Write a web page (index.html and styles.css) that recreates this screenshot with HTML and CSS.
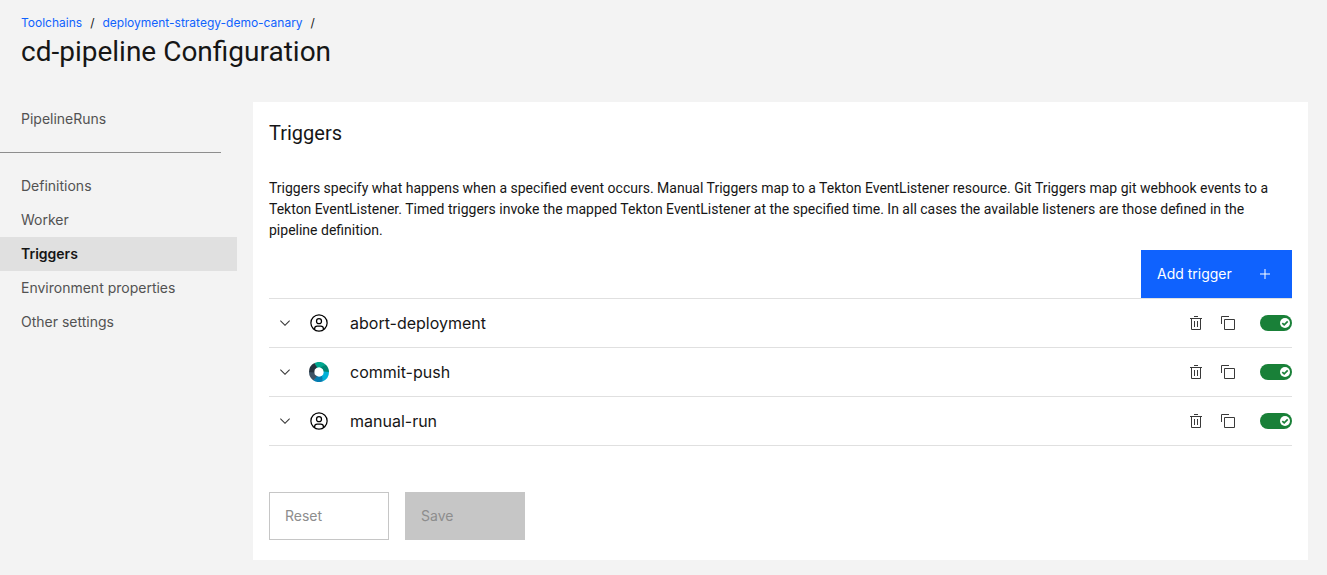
FILE: index.html
```html
<!DOCTYPE html>
<html lang="en">
<head>
<meta charset="utf-8">
<meta name="viewport" content="width=device-width, initial-scale=1">
<title>cd-pipeline Configuration</title>
<link rel="stylesheet" href="styles.css">
</head>
<body>
<svg class="sprite" aria-hidden="true">
  <symbol id="chevron" viewBox="0 0 16 16"><path d="M8 11 3 6l.7-.7L8 9.6l4.300-4.300.7.7z"/></symbol>
  <symbol id="user" viewBox="0 0 32 32"><path d="M16 8a5 5 0 1 0 5 5 5 5 0 0 0-5-5zm0 8a3 3 0 1 1 3-3 3 3 0 0 1-3 3z"/><path d="M16 2a14 14 0 1 0 14 14A14 14 0 0 0 16 2zm-6 24.400V25a3 3 0 0 1 3-3h6a3 3 0 0 1 3 3v1.400a11.900 11.900 0 0 1-12 0zm14-1.500A5 5 0 0 0 19 20h-6a5 5 0 0 0-5 4.900 12 12 0 1 1 16 0z"/></symbol>
  <symbol id="trash" viewBox="0 0 32 32"><path d="M12 12h2v12h-2zM18 12h2v12h-2zM4 6v2h2v20a2 2 0 0 0 2 2h16a2 2 0 0 0 2-2V8h2V6zm4 22V8h16v20zM12 2h8v2h-8z"/></symbol>
  <symbol id="copy" viewBox="0 0 32 32"><path d="M28 10v18H10V10h18m0-2H10a2 2 0 0 0-2 2v18a2 2 0 0 0 2 2h18a2 2 0 0 0 2-2V10a2 2 0 0 0-2-2z"/><path d="M4 18H2V4a2 2 0 0 1 2-2h14v2H4z"/></symbol>
  <symbol id="knob" viewBox="0 0 10 10"><circle cx="5" cy="5" r="5" fill="#fff"/><path d="M2.300 5.100 4.200 6.900 7.700 3.400" fill="none" stroke="#198038" stroke-width="1.700"/></symbol>
</svg>

<header class="page-header">
  <nav aria-label="Breadcrumb">
    <ol class="breadcrumb">
      <li><a href="#toolchains">Toolchains</a></li>
      <li><a href="#toolchain">deployment-strategy-demo-canary</a></li>
    </ol>
  </nav>
  <h1 class="page-title">cd-pipeline Configuration</h1>
</header>

<div class="layout">
  <nav class="side-nav" aria-label="Pipeline">
    <a class="nav-link" href="#runs">PipelineRuns</a>
    <hr class="nav-divider">
    <a class="nav-link" href="#definitions">Definitions</a>
    <a class="nav-link" href="#worker">Worker</a>
    <a class="nav-link nav-link-active" href="#triggers" aria-current="page">Triggers</a>
    <a class="nav-link" href="#environment">Environment properties</a>
    <a class="nav-link" href="#other">Other settings</a>
  </nav>

  <main class="panel">
    <h2 class="panel-title">Triggers</h2>
    <p class="panel-text">Triggers specify what happens when a specified event occurs. Manual Triggers map to a Tekton EventListener resource. Git Triggers map git webhook events to a Tekton EventListener. Timed triggers invoke the mapped Tekton EventListener at the specified time. In all cases the available listeners are those defined in the pipeline definition.</p>
    <div class="toolbar">
      <button class="button button-primary" type="button">Add trigger
        <svg class="icon" viewBox="0 0 16 16" aria-hidden="true"><path d="M8.500 7.500V3h-1v4.500H3v1h4.500V13h1V8.500H13v-1z"/></svg>
      </button>
    </div>
    <ul class="trigger-list">
      <li class="trigger">
        <button class="icon-button" type="button" aria-label="Expand abort-deployment"><svg class="icon"><use href="#chevron"/></svg></button>
        <svg class="trigger-icon" aria-hidden="true"><use href="#user"/></svg>
        <span class="trigger-name">abort-deployment</span>
        <button class="icon-button" type="button" aria-label="Delete abort-deployment"><svg class="icon"><use href="#trash"/></svg></button>
        <button class="icon-button" type="button" aria-label="Duplicate abort-deployment"><svg class="icon"><use href="#copy"/></svg></button>
        <label class="toggle"><input class="toggle-input" type="checkbox" role="switch" aria-label="Enable abort-deployment" checked><svg class="toggle-knob" aria-hidden="true"><use href="#knob"/></svg></label>
      </li>
      <li class="trigger">
        <button class="icon-button" type="button" aria-label="Expand commit-push"><svg class="icon"><use href="#chevron"/></svg></button>
        <svg class="trigger-icon" viewBox="0 0 20 20" aria-hidden="true">
          <path fill="#00a78f" d="M5.500 1.100A10 10 0 0 1 16.500 2.400L12.500 6 10 5.200 7.500 6z"/>
          <path fill="#008571" d="M16.500 2.400A10 10 0 0 1 20 10l-5.200 0-1-2.800L11.500 5.500z"/>
          <path fill="#00b0d7" d="M20 10a10 10 0 0 1-6 9.200L12 14.400 14.200 12.500 14.800 9.500z"/>
          <path fill="#047cb0" d="M14 19.200A10 10 0 0 1 4.500 18.400L7.200 13.800 10 14.800l3-.9z"/>
          <path fill="#3d5265" d="M4.500 18.400A10 10 0 0 1 0 10l5.200-.5.600 3 2.200 1.800z"/>
          <path fill="#25313d" d="M0 10A10 10 0 0 1 5.500 1.100L8 5.600 5.800 7.600 5.200 10.500z"/>
        </svg>
        <span class="trigger-name">commit-push</span>
        <button class="icon-button" type="button" aria-label="Delete commit-push"><svg class="icon"><use href="#trash"/></svg></button>
        <button class="icon-button" type="button" aria-label="Duplicate commit-push"><svg class="icon"><use href="#copy"/></svg></button>
        <label class="toggle"><input class="toggle-input" type="checkbox" role="switch" aria-label="Enable commit-push" checked><svg class="toggle-knob" aria-hidden="true"><use href="#knob"/></svg></label>
      </li>
      <li class="trigger">
        <button class="icon-button" type="button" aria-label="Expand manual-run"><svg class="icon"><use href="#chevron"/></svg></button>
        <svg class="trigger-icon" aria-hidden="true"><use href="#user"/></svg>
        <span class="trigger-name">manual-run</span>
        <button class="icon-button" type="button" aria-label="Delete manual-run"><svg class="icon"><use href="#trash"/></svg></button>
        <button class="icon-button" type="button" aria-label="Duplicate manual-run"><svg class="icon"><use href="#copy"/></svg></button>
        <label class="toggle"><input class="toggle-input" type="checkbox" role="switch" aria-label="Enable manual-run" checked><svg class="toggle-knob" aria-hidden="true"><use href="#knob"/></svg></label>
      </li>
    </ul>
    <div class="actions">
      <button class="button button-outline" type="button" disabled>Reset</button>
      <button class="button button-muted" type="button" disabled>Save</button>
    </div>
  </main>
</div>
</body>
</html>
```
FILE: styles.css
```css
* {
  box-sizing: border-box;
}

body {
  margin: 0;
  background: #f3f3f3;
  color: #161616;
  font: 14px/20px Inter, "Noto Sans", sans-serif;
}

.sprite {
  position: absolute;
  width: 0;
  height: 0;
}

.page-header {
  padding: 15px 21px 32px;
}

.breadcrumb {
  display: flex;
  margin: 0;
  padding: 0;
  list-style: none;
  font-size: 12px;
  line-height: 16px;
}

.breadcrumb li::after {
  content: "/";
  margin: 0 8px;
}

.breadcrumb a {
  color: #0f62fe;
  text-decoration: none;
}

.page-title,
.panel-title,
.panel-text {
  font-family: Roboto, "Noto Sans", sans-serif;
}

.page-title {
  margin: 3px 0 0;
  font-size: 28px;
  font-weight: 400;
  line-height: 36px;
}

.layout {
  display: grid;
  grid-template-columns: 237px minmax(0, 1fr);
  gap: 16px;
  padding: 0 19px 15px 0;
}

.side-nav {
  display: flex;
  flex-direction: column;
}

.nav-link {
  padding: 7px 21px;
  color: #525252;
  text-decoration: none;
}

.nav-link-active {
  background: #e0e0e0;
  color: #161616;
  font-weight: 600;
}

.nav-divider {
  height: 1px;
  margin: 16px 16px 16px 0;
  border: 0;
  background: #8d8d8d;
}

.panel {
  padding: 17px 16px 20px;
  background: #fff;
}

.panel-title {
  margin: 0;
  font-size: 20px;
  font-weight: 400;
  line-height: 28px;
}

.panel-text {
  margin: 31px 0 9px;
  line-height: 21px;
}

.toolbar {
  display: flex;
  justify-content: flex-end;
}

.button {
  display: flex;
  align-items: center;
  height: 48px;
  padding: 0 15px;
  border: 1px solid transparent;
  font: inherit;
}

.button-primary {
  justify-content: space-between;
  gap: 24px;
  min-width: 151px;
  padding-right: 18px;
  background: #0f62fe;
  color: #fff;
}

.button-outline,
.button-muted {
  min-width: 120px;
  border-color: #c6c6c6;
  color: #8d8d8d;
}

.button-outline {
  background: #fff;
}

.button-muted {
  background: #c6c6c6;
}

.icon {
  display: block;
  width: 16px;
  height: 16px;
  fill: currentColor;
}

.trigger-list {
  margin: 0;
  padding: 0;
  border-top: 1px solid #e0e0e0;
  list-style: none;
}

.trigger {
  display: flex;
  align-items: center;
  height: 49px;
  border-bottom: 1px solid #e0e0e0;
}

.icon-button {
  padding: 8px;
  border: 0;
  background: none;
  color: #393939;
}

.trigger-icon {
  width: 20px;
  height: 20px;
  margin: 0 21px 0 8px;
}

.trigger-name {
  flex: 1;
  font-size: 16px;
}

.toggle {
  position: relative;
  display: flex;
  margin-left: 16px;
}

.toggle-input {
  width: 32px;
  height: 16px;
  margin: 0;
  border-radius: 8px;
  background: #198038;
  appearance: none;
}

.toggle-knob {
  position: absolute;
  top: 3px;
  right: 2px;
  width: 10px;
  height: 10px;
  pointer-events: none;
}

.toggle-input:not(:checked) {
  background: #8d8d8d;
}

.toggle-input:not(:checked) + .toggle-knob {
  right: 20px;
}

.actions {
  display: flex;
  gap: 16px;
  margin-top: 46px;
}
```
